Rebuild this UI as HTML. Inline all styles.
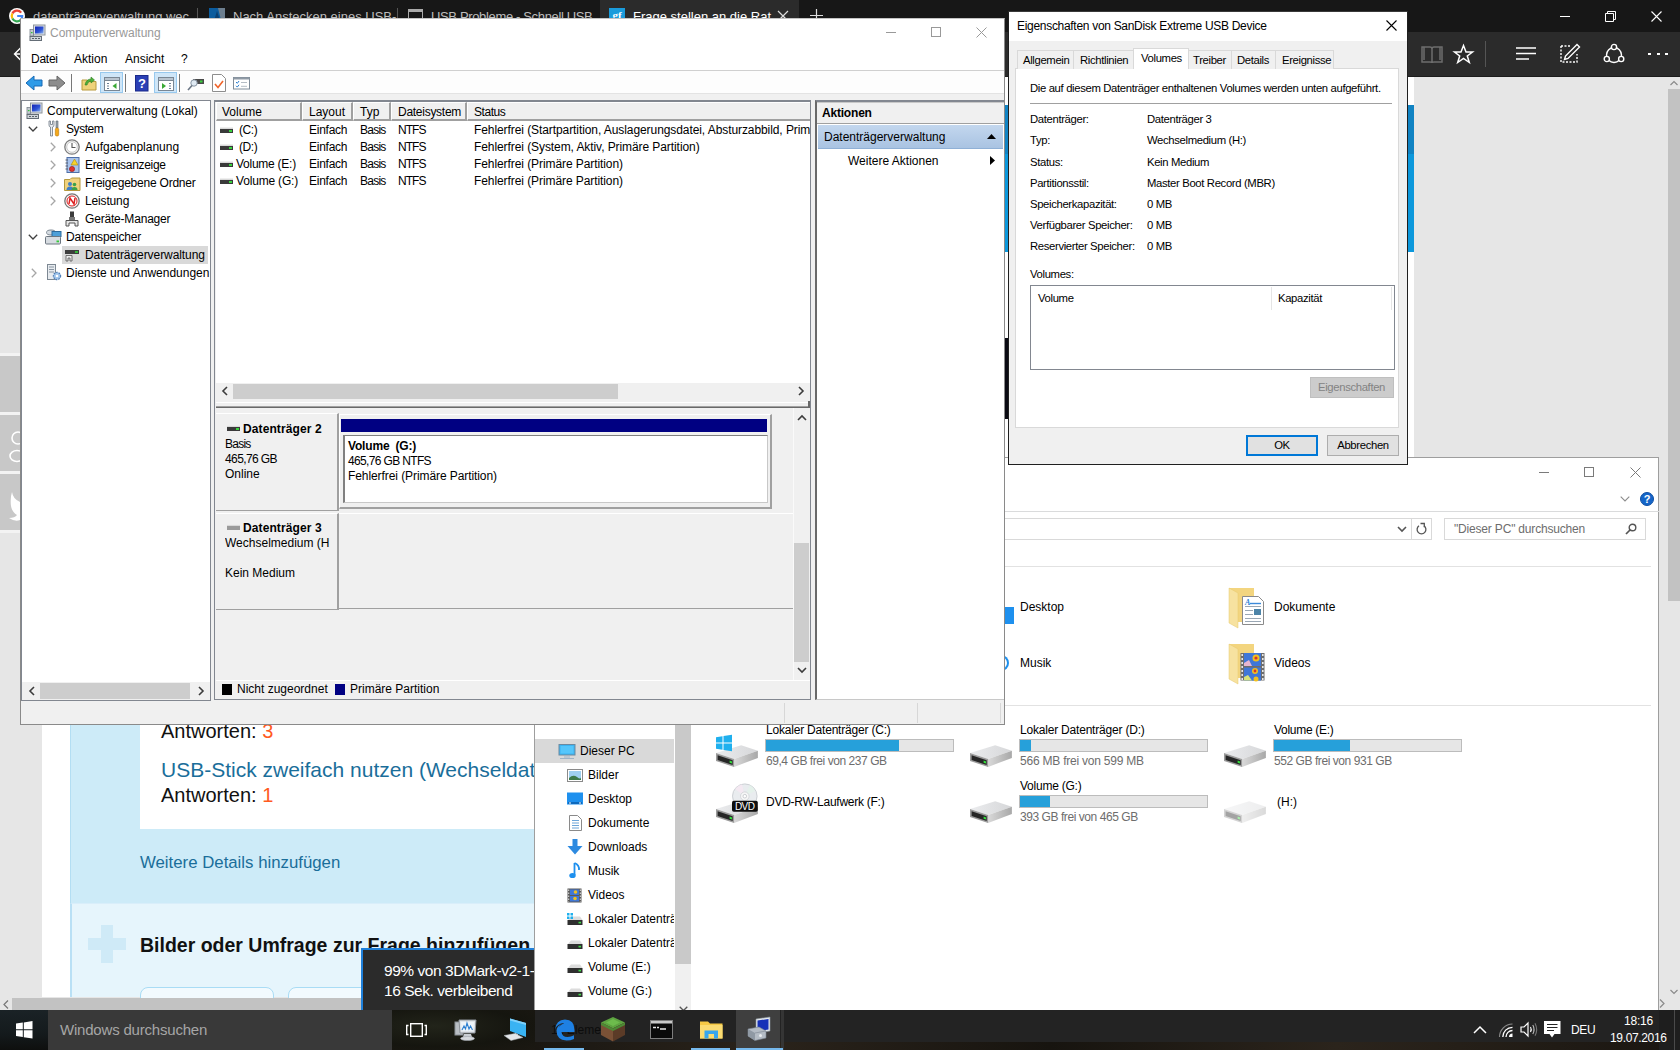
<!DOCTYPE html>
<html lang="de">
<head>
<meta charset="utf-8">
<title>Desktop</title>
<style>
*{box-sizing:border-box;margin:0;padding:0}
html,body{width:1680px;height:1050px;overflow:hidden;background:#1b1814}
body{position:relative;font-family:"Liberation Sans",sans-serif;font-size:12px;color:#000}
.a{position:absolute;white-space:nowrap}
.t{position:absolute;white-space:nowrap;line-height:16px;height:16px}
svg{position:absolute;overflow:visible}
/* ---------- EDGE ---------- */
#edge{left:0;top:0;width:1680px;height:1010px;background:#e6e6e6;overflow:hidden}
#tabbar{left:0;top:0;width:1680px;height:32px;background:#171717}
#etool{left:0;top:32px;width:1680px;height:45px;background:#2b2b2b;border-bottom:1px solid #1c1c1c}
.tabt{color:#bdbdbd;font-size:13px;top:8px;line-height:18px}
/* ---------- CV ---------- */
.win{position:absolute;left:0;top:0;width:1680px;height:1050px}
.hd{top:102px;height:19px;background:#f0f0f0;border-left:1px solid #fff;border-top:1px solid #fff;border-right:2px solid #a0a0a0;border-bottom:2px solid #a0a0a0}
.dk{width:13px;height:6px;background:#d9d9d9;border-top:1px solid #eee}
.dk i{position:absolute;left:0;top:1px;width:13px;height:4px;background:#3a3a3a}
.dk i:after{content:"";position:absolute;right:1px;top:1px;width:3px;height:2px;background:#39d43c}
.dk.g i{background:#9a9a9a}
.dk.g i:after{display:none}
#cv{left:20px;top:18px;width:985px;height:705px;background:#fff;border:1px solid #9b9b9b;overflow:hidden}
/* ---------- DLG ---------- */
#dlg{left:1008px;top:11px;width:400px;height:454px;background:#f0f0f0;border:1px solid #1c1c1c;overflow:hidden}
.d{font-size:11.3px;letter-spacing:-0.35px}
.tb{top:50px;height:19px;background:#f0f0f0;border:1px solid #d9d9d9;border-bottom:none}
/* ---------- EXPLORER ---------- */
#ex{left:535px;top:440px;width:1119px;height:602px;background:#fff;border:1px solid #8e8e8e;overflow:hidden}
.bar{width:189px;height:13px;background:#e6e6e6;border:1px solid #bcbcbc}
.bar i{position:absolute;left:0;top:0;height:11px;background:#26a0da}
.fr{color:#6d6d6d;letter-spacing:-.44px}
/* ---------- TASKBAR ---------- */
#tb{left:0;top:1010px;width:1680px;height:40px;background:#1d1b18;overflow:hidden}
</style>
</head>
<body>
<svg width="0" height="0" style="left:-10px;top:-10px"><defs>
<linearGradient id="dg" x1="0" y1="0" x2="1" y2="0"><stop offset="0" stop-color="#ebecee"/><stop offset="1" stop-color="#d6d7d9"/></linearGradient><linearGradient id="dg2" x1="0" y1="0" x2="1" y2="0"><stop offset="0" stop-color="#d9d9d9"/><stop offset="1" stop-color="#a8a8a8"/></linearGradient>
<linearGradient id="scr" x1="0" y1="0" x2="1" y2="1"><stop offset="0" stop-color="#1423b4"/><stop offset=".6" stop-color="#2f56d6"/><stop offset="1" stop-color="#8fb6ee"/></linearGradient>
<g id="drv"><path d="M1 19.100 L26.200 11.200 L42.900 16.700 L19.100 25 Z" fill="url(#dg)"/><path d="M19.100 25 L42.900 16.700 V23.900 L19.100 32.900 Z" fill="url(#dg2)"/><path d="M1 19.100 L19.100 25 V32.900 L1 27 Z" fill="#9b9b9b"/><path d="M2.600 21.300 L17.700 26.300 V31 L2.600 26.100 Z" fill="#262626"/><path d="M14.600 26.600 L17 27.400 V29.600 L14.600 28.800 Z" fill="#35e03c"/></g>
<g id="sdrv"><path d="M1 7 L4 3.500 H13 L15.500 7 Z" fill="#dcdcdc"/><rect x=".5" y="7" width="15" height="5" fill="#2f2f2f"/><rect x="11.500" y="8.800" width="2.500" height="1.600" fill="#3fdc45"/></g>
</defs></svg>
<div id="edge" class="a">
  <!-- page content -->
  <div class="a" style="left:0;top:353px;width:20px;height:180px;background:#f3f3f3"></div>
  <div class="a" style="left:0;top:356px;width:20px;height:56px;background:#c8c8c8"></div>
  <div class="a" style="left:0;top:415px;width:20px;height:56px;background:#c8c8c8"></div>
  <div class="a" style="left:0;top:474px;width:20px;height:56px;background:#c8c8c8"></div>
  <svg style="left:9px;top:431px" width="12" height="32"><circle cx="9" cy="7" r="6" fill="none" stroke="#fff" stroke-width="1.6"/><ellipse cx="8" cy="25" rx="7" ry="5.500" fill="none" stroke="#fff" stroke-width="1.600"/></svg>
  <svg style="left:9px;top:492px" width="12" height="30"><path d="M3 0 Q4 7 11 10 V28 Q6 30 0 26 Q6 26 8 23 Q3 20 2 14 Q1 6 3 0 Z" fill="#fff"/></svg>
  <!-- white page column -->
  <div class="a" style="left:42px;top:77px;width:1372px;height:920px;background:#fff"></div>
  <div class="a" style="left:900px;top:105px;width:514px;height:147px;background:#0c98dc"></div>
  <div class="a" style="left:900px;top:105px;width:514px;height:49px;background:#1183c3"></div>
  <div class="a" style="left:900px;top:338px;width:108px;height:81px;background:#0a0a12"></div>
  <div class="a" style="left:70px;top:600px;width:1534px;height:304px;background:#cdebf8;border-left:1px solid #b3def3"></div>
  <div class="a" style="left:140px;top:600px;width:1464px;height:229px;background:#fff"></div>
  <div class="a" style="left:70px;top:903px;width:1534px;height:94px;background:#e6f5fc;border-left:2px solid #b9e0f5;border-top:1px solid #d9eefa"></div>
  <div class="a" style="left:161px;top:719px;font-size:20px;line-height:24px;color:#111">Antworten: <span style="color:#ff5a1f">3</span></div>
  <div class="a" style="left:161px;top:757px;font-size:21px;line-height:26px;color:#1a6e9a">USB-Stick zweifach nutzen (Wechseldatenträger und Festplatte)</div>
  <div class="a" style="left:161px;top:783px;font-size:20px;line-height:24px;color:#111">Antworten: <span style="color:#ff5a1f">1</span></div>
  <div class="a" style="left:140px;top:852px;font-size:16.8px;line-height:22px;color:#1a6e9a">Weitere Details hinzufügen</div>
  <!-- plus icon -->
  <div class="a" style="left:101px;top:925px;width:12px;height:38px;background:#cfeaf7"></div>
  <div class="a" style="left:88px;top:938px;width:38px;height:12px;background:#cfeaf7"></div>
  <div class="a" style="left:140px;top:932px;font-size:19.5px;font-weight:bold;line-height:26px;color:#111">Bilder oder Umfrage zur Frage hinzufügen</div>
  <div class="a" style="left:140px;top:987px;width:134px;height:30px;border:1px solid #a9dcf5;border-radius:8px;background:#f2fafe"></div>
  <div class="a" style="left:288px;top:987px;width:134px;height:30px;border:1px solid #a9dcf5;border-radius:8px;background:#f2fafe"></div>
  <!-- horizontal scrollbar -->
  <div class="a" style="left:0;top:998px;width:1667px;height:12px;background:#e6e6e6"></div>
  <div class="a" style="left:12px;top:998px;width:1500px;height:12px;background:#c2c2c2"></div>
  <svg style="left:2px;top:1000px" width="8" height="9"><path d="M6 0.5 L2 4.5 L6 8.5" fill="none" stroke="#777" stroke-width="1.2"/></svg>
  <svg style="left:1659px;top:999px" width="6" height="9"><path d="M1 0.5 L5 4.5 L1 8.5" fill="none" stroke="#8a8a8a" stroke-width="1.2"/></svg>
  <!-- vertical scrollbar -->
  <div class="a" style="left:1667px;top:77px;width:13px;height:920px;background:#e6e6e6"></div>
  <div class="a" style="left:1668px;top:89px;width:12px;height:512px;background:#c2c2c2"></div>
  <svg style="left:1670px;top:80px" width="8" height="6"><path d="M0.5 5 L4 1.5 L7.500 5" fill="none" stroke="#8a8a8a" stroke-width="1.2"/></svg>
  <svg style="left:1670px;top:989px" width="8" height="6"><path d="M0.5 1 L4 4.500 L7.500 1" fill="none" stroke="#8a8a8a" stroke-width="1.2"/></svg>
  <!-- download notification -->
  <div class="a" style="left:361px;top:948px;width:180px;height:62px;background:#2b2b2b;border-left:2px solid #1e7fd9;border-top:2px solid #1e7fd9"></div>
  <div class="a" style="left:384px;top:961px;font-size:15.5px;letter-spacing:-.45px;line-height:20px;color:#fff">99% von 3DMark-v2-1-2852.zip</div>
  <div class="a" style="left:384px;top:981px;font-size:15.5px;letter-spacing:-.45px;line-height:20px;color:#fff">16 Sek. verbleibend</div>

  <!-- tab bar -->
  <div id="tabbar" class="a"></div>
  <div class="a" style="left:600px;top:0;width:199px;height:31px;background:#2b2b2b"></div>
  <svg style="left:9px;top:8px" width="16" height="16"><circle cx="8" cy="8" r="8" fill="#fff"/><path d="M12.200 4.600 A5.200 5.200 0 0 0 3.400 5.500" fill="none" stroke="#ea4335" stroke-width="2.200"/><path d="M3.400 5.500 A5.200 5.200 0 0 0 3.400 10.500" fill="none" stroke="#fbbc05" stroke-width="2.200"/><path d="M3.400 10.500 A5.200 5.200 0 0 0 11.800 11.800" fill="none" stroke="#34a853" stroke-width="2.200"/><path d="M11.800 11.800 A5.200 5.200 0 0 0 13.200 8 H8.200" fill="none" stroke="#4285f4" stroke-width="2.200"/></svg>
  <div class="a tabt" style="left:33px">datenträgerverwaltung wec</div>
  <div class="a" style="left:197px;top:8px;width:1px;height:16px;background:#555"></div>
  <svg style="left:209px;top:8px" width="16" height="16"><rect width="16" height="16" fill="#0b5c9e"/><path d="M9 0 H16 V16 H13 Z" fill="#6d7f8f"/><path d="M8 3 L4 16 H6.500 L8 10 L9.500 16 H12 Z" fill="#0a3f70"/></svg>
  <div class="a tabt" style="left:233px">Nach Anstecken eines USB-</div>
  <div class="a" style="left:397px;top:8px;width:1px;height:16px;background:#555"></div>
  <div class="a" style="left:408px;top:9px;width:15px;height:13px;border:1px solid #aaa;border-top:3px solid #aaa"></div>
  <div class="a tabt" style="left:431px;letter-spacing:-.35px">USB Probleme - Schnell USB</div>
  <div class="a" style="left:609px;top:8px;width:16px;height:16px;background:#1a9bdb;color:#fff;font:bold 11px/14px 'Liberation Serif',serif;text-align:center">gf</div>
  <div class="a tabt" style="left:633px;color:#fff">Frage stellen an die Rat</div>
  <svg style="left:777px;top:10px" width="12" height="12"><path d="M1 1 L11 11 M11 1 L1 11" stroke="#ddd" stroke-width="1.2"/></svg>
  <svg style="left:810px;top:9px" width="13" height="13"><path d="M6.5 0 V13 M0 6.5 H13" stroke="#ddd" stroke-width="1.2"/></svg>
  <!-- window controls -->
  <div class="a" style="left:1560px;top:16px;width:10px;height:1px;background:#fff"></div>
  <svg style="left:1605px;top:11px" width="11" height="11"><path d="M0.5 2.5 H8.5 V10.5 H0.5 Z M2.5 2.5 V0.5 H10.5 V8.5 H8.5" fill="none" stroke="#fff" stroke-width="1"/></svg>
  <svg style="left:1651px;top:11px" width="11" height="11"><path d="M0.5 0.5 L10.5 10.5 M10.5 0.5 L0.5 10.5" stroke="#fff" stroke-width="1.1"/></svg>
  <!-- toolbar -->
  <div id="etool" class="a"></div>
  <svg style="left:13px;top:47px" width="16" height="14"><path d="M8 0.5 L1.5 7 L8 13.5 M1.5 7 H16" fill="none" stroke="#fff" stroke-width="1.4"/></svg>
  <!-- reading view (disabled) -->
  <svg style="left:1421px;top:45px" width="22" height="20"><path d="M1 2 H9 Q11 2 11 4 V18 Q11 17 9 17 H1 Z M21 2 H13 Q11 2 11 4 V18 Q11 17 13 17 H21 Z M3 2 V15 M19 2 V15" fill="none" stroke="#6d6d6d" stroke-width="1.5"/></svg>
  <svg style="left:1453px;top:44px" width="21" height="20"><path d="M10.5 1.5 L13 8 H19.5 L14.3 12 L16.3 18.5 L10.5 14.5 L4.7 18.5 L6.7 12 L1.5 8 H8 Z" fill="none" stroke="#fff" stroke-width="1.5" stroke-linejoin="miter"/></svg>
  <div class="a" style="left:1485px;top:41px;width:1px;height:26px;background:#555"></div>
  <svg style="left:1516px;top:47px" width="20" height="14"><path d="M0 1 H20 M0 6.5 H20 M0 12 H13" stroke="#fff" stroke-width="1.5"/></svg>
  <svg style="left:1559px;top:43px" width="22" height="22"><path d="M2 3 H12 M2 3 V19 H18 V11" fill="none" stroke="#fff" stroke-width="1.4" stroke-dasharray="2 1.5"/><path d="M18 1.5 L20.5 4 L9 15.5 L5.5 16.5 L6.5 13 Z" fill="none" stroke="#fff" stroke-width="1.4"/></svg>
  <svg style="left:1603px;top:43px" width="22" height="22"><circle cx="11" cy="12" r="7.5" fill="none" stroke="#fff" stroke-width="1.4"/><circle cx="11" cy="4" r="2.6" fill="#2b2b2b" stroke="#fff" stroke-width="1.4"/><circle cx="3.8" cy="16" r="2.6" fill="#2b2b2b" stroke="#fff" stroke-width="1.4"/><circle cx="18.2" cy="16" r="2.6" fill="#2b2b2b" stroke="#fff" stroke-width="1.4"/></svg>
  <div class="a" style="left:1648px;top:53px;width:3px;height:2px;background:#fff"></div>
  <div class="a" style="left:1657px;top:53px;width:3px;height:2px;background:#fff"></div>
  <div class="a" style="left:1665px;top:53px;width:3px;height:2px;background:#fff"></div>
</div>

<div class="win" style="clip-path:inset(457px 21px 9px 534px)">
  <div class="a" style="left:534px;top:457px;width:1125px;height:585px;background:#fff;border:1px solid #9e9e9e"></div>
  <!-- caption buttons -->
  <div class="a" style="left:1539px;top:472px;width:10px;height:1px;background:#7a7a7a"></div>
  <div class="a" style="left:1584px;top:467px;width:10px;height:10px;border:1px solid #7a7a7a"></div>
  <svg style="left:1630px;top:467px" width="11" height="11"><path d="M0.5 0.5 L10.5 10.5 M10.5 0.5 L0.5 10.5" stroke="#7a7a7a" stroke-width="1"/></svg>
  <svg style="left:1620px;top:496px" width="10" height="6"><path d="M.7 .7 L5 5 L9.3 .7" fill="none" stroke="#8c8c8c" stroke-width="1.1"/></svg>
  <div class="a" style="left:1640px;top:492px;width:14px;height:14px;border-radius:7px;background:#1565c8;border:1px solid #0f4fa3;color:#fff;font-weight:bold;font-size:11px;line-height:12px;text-align:center">?</div>
  <div class="a" style="left:535px;top:511px;width:1124px;height:1px;background:#dadbdc"></div>
  <!-- address -->
  <div class="a" style="left:700px;top:518px;width:732px;height:22px;border:1px solid #d9d9d9"></div>
  <div class="a" style="left:1411px;top:519px;width:1px;height:20px;background:#d9d9d9"></div>
  <svg style="left:1397px;top:526px" width="10" height="7"><path d="M1 1 L5 5 L9 1" fill="none" stroke="#555" stroke-width="1.6"/></svg>
  <svg style="left:1416px;top:523px" width="11" height="12"><path d="M3 2.8 A4.4 4.4 0 1 0 8 2.8" fill="none" stroke="#555" stroke-width="1.3"/><path d="M4.5 .5 H8.3 V4.3" fill="none" stroke="#555" stroke-width="1.3"/></svg>
  <div class="a" style="left:1444px;top:518px;width:202px;height:22px;border:1px solid #d9d9d9"></div>
  <div class="t" style="left:1454px;top:521px;color:#6d6d6d;letter-spacing:-.18px">"Dieser PC" durchsuchen</div>
  <svg style="left:1625px;top:523px" width="12" height="12"><circle cx="7.5" cy="4.5" r="3.3" fill="none" stroke="#555" stroke-width="1.4"/><path d="M5 7 L1 11" stroke="#555" stroke-width="1.7"/></svg>
  <!-- section lines -->
  <div class="a" style="left:1000px;top:566px;width:651px;height:1px;background:#e2e2e2"></div>
  <div class="a" style="left:1000px;top:705px;width:651px;height:1px;background:#e2e2e2"></div>
  <!-- folders -->
  <div class="a" style="left:1004px;top:607px;width:10px;height:17px;background:#1e90ee"></div>
  <div class="a" style="left:1000px;top:655px;width:9px;height:16px;border:2px solid #1e90ee;border-radius:0 8px 8px 0;border-left:none"></div>
  <div class="t" style="left:1020px;top:599px">Desktop</div>
  <div class="t" style="left:1020px;top:655px">Musik</div>
  <svg style="left:1228px;top:587px" width="38" height="42"><path d="M1 1 H26 V35 H10 Z" fill="#f3d57f"/><path d="M1 1 L10 6 V41 L1 36 Z" fill="#f7e2a0" stroke="#e6c96e" stroke-width=".5"/><path d="M14.500 9.500 H30.500 L35.500 14.500 V37.500 H14.500 Z" fill="#fff" stroke="#8a8a8a"/><path d="M17 19.500 H33 M17 23.500 H25 M17 27.500 H25 M17 31.500 H33 M17 34.500 H33" stroke="#9aa7b4"/><path d="M22 16.500 H33" stroke="#3b8ad9" stroke-width="1.4"/><rect x="26" y="22" width="7" height="6" fill="#4c84a8"/><text x="17" y="18" font-family="Liberation Serif,serif" font-style="italic" font-weight="bold" font-size="8" fill="#2f7fd6">A</text></svg>
  <div class="t" style="left:1274px;top:599px">Dokumente</div>
  <svg style="left:1228px;top:643px" width="38" height="42"><path d="M1 1 H26 V35 H10 Z" fill="#f3d57f"/><path d="M1 1 L10 6 V41 L1 36 Z" fill="#f7e2a0" stroke="#e6c96e" stroke-width=".5"/><rect x="12.500" y="10" width="24" height="27.500" fill="#6d6d6d"/><rect x="16" y="10" width="17" height="13" fill="#3f77d8"/><rect x="16" y="24.500" width="17" height="13" fill="#3f77d8"/><path d="M14.2 11 V37 M34.800 11 V37" stroke="#e8e8e8" stroke-width="1.6" stroke-dasharray="2 2"/><circle cx="28" cy="15" r="3.500" fill="#f0c020"/><circle cx="28" cy="15" r="1.6" fill="#d9342b"/><circle cx="27" cy="28" r="3" fill="#f0c020"/><circle cx="27" cy="28" r="1.400" fill="#d9342b"/><path d="M16 20 L21 17 L24 23 H16 Z" fill="#e7b6d0"/><circle cx="28" cy="36" r="2.500" fill="#f0c020"/><path d="M16 34 L20 32 L24 37.500 H16 Z" fill="#d8e27a"/></svg>
  <div class="t" style="left:1274px;top:655px">Videos</div>
  <!-- drives row 1 -->
  <div class="t" style="left:766px;top:722px;letter-spacing:-.2px">Lokaler Datenträger (C:)</div>
  <div class="a bar" style="left:765px;top:739px"><i style="width:133px"></i></div>
  <div class="t fr" style="left:766px;top:753px">69,4 GB frei von 237 GB</div>
  <div class="t" style="left:1020px;top:722px;letter-spacing:-.2px">Lokaler Datenträger (D:)</div>
  <div class="a bar" style="left:1019px;top:739px"><i style="width:11px"></i></div>
  <div class="t fr" style="left:1020px;top:753px;letter-spacing:-.22px">566 MB frei von 599 MB</div>
  <div class="t" style="left:1274px;top:722px;letter-spacing:-.29px">Volume (E:)</div>
  <div class="a bar" style="left:1273px;top:739px"><i style="width:76px"></i></div>
  <div class="t fr" style="left:1274px;top:753px">552 GB frei von 931 GB</div>
  <!-- drives row 2 -->
  <div class="t" style="left:766px;top:794px;letter-spacing:-.26px">DVD-RW-Laufwerk (F:)</div>
  <div class="t" style="left:1020px;top:778px;letter-spacing:-.23px">Volume (G:)</div>
  <div class="a bar" style="left:1019px;top:795px"><i style="width:30px"></i></div>
  <div class="t fr" style="left:1020px;top:809px">393 GB frei von 465 GB</div>
  <div class="t" style="left:1277px;top:794px">(H:)</div>
  <!-- drive icons -->
  <svg style="left:715px;top:734px" width="46" height="34"><use href="#drv"/><path d="M1 3.200 L7.500 2.200 V8.500 H1 Z M8.500 2 L17 .8 V8.500 H8.500 Z M1 9.500 H7.500 V15.800 L1 14.800 Z M8.500 9.500 H17 V17.200 L8.500 16 Z" fill="#1fb0ee"/></svg>
  <svg style="left:969px;top:734px" width="46" height="34"><use href="#drv"/></svg>
  <svg style="left:1223px;top:734px" width="46" height="34"><use href="#drv"/></svg>
  <svg style="left:715px;top:790px" width="46" height="34"><use href="#drv"/><circle cx="29.800" cy="6.200" r="12.300" fill="#e9ecef" stroke="#c3c7cc" stroke-width=".8"/><path d="M29.800 6.200 L20 -1 A12.300 12.300 0 0 1 27 -5.800 Z" fill="#f6e9f3" opacity=".8"/><path d="M29.800 6.200 L40 1 A12.300 12.300 0 0 0 35 -5 Z" fill="#e3f3ea" opacity=".8"/><circle cx="29.800" cy="6.200" r="4.300" fill="#f7f7f7" stroke="#cfd2d6" stroke-width=".8"/><circle cx="29.800" cy="6.200" r="1.800" fill="#fff" stroke="#b9bcc1" stroke-width=".7"/><rect x="17" y="10.700" width="25.800" height="11" rx="1.800" fill="#0e0e0e"/><text x="29.900" y="19.800" font-family="Liberation Sans,sans-serif" font-size="10" fill="#fff" text-anchor="middle" textLength="20">DVD</text></svg>
  <svg style="left:969px;top:790px" width="46" height="34"><use href="#drv"/></svg>
  <svg style="left:1223px;top:790px" width="46" height="34" opacity=".42"><use href="#drv"/></svg>
  <!-- nav pane -->
  <div class="a" style="left:535px;top:739px;width:139px;height:24px;background:#d9d9d9"></div>
  <div class="a" style="left:675px;top:700px;width:16px;height:342px;background:#f0f0f0"></div>
  <div class="a" style="left:675px;top:700px;width:16px;height:264px;background:#c9c9c9"></div>
  <svg style="left:679px;top:1006px" width="9" height="6"><path d="M.7 .7 L4.500 4.500 L8.300 .7" fill="none" stroke="#555" stroke-width="1.300"/></svg>
  <div class="t" style="left:580px;top:743px">Dieser PC</div>
  <div class="t" style="left:588px;top:767px">Bilder</div>
  <div class="t" style="left:588px;top:791px">Desktop</div>
  <div class="t" style="left:588px;top:815px">Dokumente</div>
  <div class="t" style="left:588px;top:839px">Downloads</div>
  <div class="t" style="left:588px;top:863px">Musik</div>
  <div class="t" style="left:588px;top:887px">Videos</div>
  <div class="a" style="left:588px;top:911px;width:86px;height:16px;overflow:hidden"><div class="t" style="left:0;top:0">Lokaler Datenträger (C:)</div></div>
  <div class="a" style="left:588px;top:935px;width:86px;height:16px;overflow:hidden"><div class="t" style="left:0;top:0">Lokaler Datenträger (D:)</div></div>
  <div class="t" style="left:588px;top:959px">Volume (E:)</div>
  <div class="t" style="left:588px;top:983px">Volume (G:)</div>
  <div class="t" style="left:551px;top:1022px;color:#333">11 Elemente</div>
  <!-- nav icons -->
  <svg style="left:558px;top:744px" width="18" height="15"><rect x="1" y=".5" width="16" height="10.500" fill="#3bb4f2" stroke="#6c8aa0"/><rect x="2.500" y="2" width="13" height="7.500" fill="#55c6fb"/><path d="M6 13 H12 M2 14.500 H16" stroke="#9fb3c6" stroke-width="1"/></svg>
  <svg style="left:567px;top:769px" width="16" height="13"><rect x=".5" y=".5" width="15" height="12" fill="#fff" stroke="#8a8a8a"/><rect x="2" y="2" width="12" height="9" fill="#9fd0f0"/><path d="M2 9 Q6 5 10 8 T14 8 V11 H2 Z" fill="#3d7a4a"/></svg>
  <svg style="left:567px;top:792px" width="16" height="13"><rect x="0" y=".5" width="16" height="12" fill="#1e90ee"/><path d="M1 11 H15" stroke="#0a5cab" stroke-width="1.500"/><path d="M2 11 H4 M12 11 H14" stroke="#fff" stroke-width="1"/></svg>
  <svg style="left:569px;top:815px" width="13" height="16"><path d="M.5 .5 H8.500 L12.500 4.500 V15.500 H.5 Z" fill="#fff" stroke="#8a8a8a"/><path d="M3 5.500 H10 M3 8 H10 M3 10.500 H10 M3 13 H10" stroke="#5b9bd5" stroke-width=".9"/></svg>
  <svg style="left:567px;top:839px" width="16" height="16"><path d="M5.500 0 H10.500 V7 H15.500 L8 15.500 L.5 7 H5.500 Z" fill="#2d8ae0"/></svg>
  <svg style="left:569px;top:862px" width="12" height="17"><path d="M5.500 1 V13" stroke="#1e90ee" stroke-width="1.800"/><path d="M5.500 1 Q10.500 3 10 8" fill="none" stroke="#1e90ee" stroke-width="1.800"/><ellipse cx="3.500" cy="13.500" rx="3.200" ry="2.600" fill="#1e90ee"/></svg>
  <svg style="left:567px;top:888px" width="15" height="15"><rect x=".5" y=".5" width="14" height="14" fill="#5a5a5a"/><rect x="3" y="1.500" width="9" height="5.500" fill="#3f77d8"/><rect x="3" y="8" width="9" height="5.500" fill="#3f77d8"/><circle cx="8.500" cy="4" r="1.800" fill="#f0c020"/><circle cx="8" cy="10.500" r="1.800" fill="#f0c020"/><path d="M1.700 1.500 V14 M13.300 1.500 V14" stroke="#e0e0e0" stroke-width="1" stroke-dasharray="1.500 1.500"/></svg>
  <svg style="left:567px;top:913px" width="16" height="13"><use href="#sdrv"/><path d="M0 0 H2.500 V2.500 H0 Z M3.500 0 H6 V2.500 H3.500 Z M0 3.500 H2.500 V6 H0 Z M3.500 3.500 H6 V6 H3.500 Z" fill="#1fb0ee"/></svg>
  <svg style="left:567px;top:937px" width="16" height="13"><use href="#sdrv"/></svg>
  <svg style="left:567px;top:961px" width="16" height="13"><use href="#sdrv"/></svg>
  <svg style="left:567px;top:985px" width="16" height="13"><use href="#sdrv"/></svg>
</div>

<div class="win" style="clip-path:inset(18px 675px 325px 20px)">
  <div class="a" style="left:20px;top:18px;width:985px;height:707px;background:#fff;border:1px solid #8a8a8a;border-top-color:#c4c4c4"></div>
  <!-- title -->
  <svg style="left:29px;top:24px" width="17" height="17" viewBox="0 0 17 17"><rect x="4.500" y="1" width="11.500" height="10" fill="#dde1e5" stroke="#8d959d"/><rect x="6" y="2.500" width="8.500" height="7" fill="url(#scr)"/><rect x="1" y="5.500" width="3.500" height="6.500" fill="#c5cbd1" stroke="#7a838c" stroke-width=".8"/><rect x="2" y="8" width="1.500" height="1.200" fill="#2fc43a"/><rect x="1" y="12.500" width="11.500" height="4" fill="#cfd5da" stroke="#646d76"/><path d="M3 14.500 H5 M6 14.500 H8 M9 14.500 H11" stroke="#59626b"/></svg>
  <div class="t" style="left:50px;top:25px;color:#999">Computerverwaltung</div>
  <div class="a" style="left:886px;top:32px;width:10px;height:1px;background:#999"></div>
  <div class="a" style="left:931px;top:27px;width:10px;height:10px;border:1px solid #999"></div>
  <svg style="left:976px;top:27px" width="11" height="11"><path d="M0.5 0.5 L10.5 10.5 M10.5 0.5 L0.5 10.5" stroke="#999" stroke-width="1"/></svg>
  <!-- menu -->
  <div class="t" style="left:31px;top:51px;letter-spacing:-0.25px">Datei</div>
  <div class="t" style="left:74px;top:51px">Aktion</div>
  <div class="t" style="left:125px;top:51px">Ansicht</div>
  <div class="t" style="left:181px;top:51px">?</div>
  <div class="a" style="left:21px;top:70px;width:983px;height:1px;background:#d0d0d0"></div>
  <!-- toolbar -->
  <div class="a" style="left:21px;top:71px;width:983px;height:23px;background:#fdfdfd"></div>
  <div class="a" style="left:21px;top:94px;width:983px;height:630px;background:#f0f0f0"></div>
  <div class="a" style="left:21px;top:93px;width:983px;height:1px;background:#e3e3e3"></div>
  <svg style="left:25px;top:75px" width="18" height="16"><path d="M1 8 L9 1 V5 H17 V11 H9 V15 Z" fill="#2e9be8" stroke="#1769b5" stroke-width="1"/></svg>
  <svg style="left:48px;top:75px" width="18" height="16"><path d="M17 8 L9 1 V5 H1 V11 H9 V15 Z" fill="#8d8d8d" stroke="#666" stroke-width="1"/></svg>
  <div class="a" style="left:71px;top:74px;width:1px;height:18px;background:#777"></div>
  <svg style="left:81px;top:75px" width="16" height="16"><path d="M1 5 H6 L7.5 6.5 H15 V15 H1 Z" fill="#efd27a" stroke="#b99a3d"/><path d="M4 10 Q5 4 10 4 V2 L13.5 5 L10 8 V6 Q7 6 6 10 Z" fill="#4caf3a" stroke="#2f7d22" stroke-width=".6"/></svg>
  <div class="a" style="left:100px;top:72px;width:23px;height:21px;background:#cfe6f8;border:1px solid #98c9ee"></div>
  <svg style="left:104px;top:77px" width="16" height="14"><rect x=".5" y=".5" width="15" height="13" fill="#fff" stroke="#7a8794"/><rect x=".5" y=".5" width="15" height="3" fill="#b9c4cf" stroke="#7a8794"/><path d="M3 6.5 H5 M3 9 H5 M3 11.5 H5" stroke="#6b7f95"/><path d="M12.5 6 V12 L8.5 9 Z" fill="#3aa835"/></svg>
  <div class="a" style="left:125px;top:74px;width:1px;height:18px;background:#777"></div>
  <svg style="left:135px;top:75px" width="14" height="17"><rect x=".5" y=".5" width="12.5" height="15.5" fill="#2a3fb5" stroke="#1a2a8a"/><text x="7" y="13" font-family="Liberation Sans,sans-serif" font-size="13" font-weight="bold" fill="#fff" text-anchor="middle">?</text></svg>
  <div class="a" style="left:154px;top:72px;width:23px;height:21px;background:#cfe6f8;border:1px solid #98c9ee"></div>
  <svg style="left:158px;top:77px" width="16" height="14"><rect x=".5" y=".5" width="15" height="13" fill="#fff" stroke="#7a8794"/><rect x=".5" y=".5" width="15" height="3" fill="#b9c4cf" stroke="#7a8794"/><path d="M11 6.5 H13 M11 9 H13 M11 11.5 H13" stroke="#6b7f95"/><path d="M4 6 V12 L8 9 Z" fill="#3aa835"/></svg>
  <div class="a" style="left:179px;top:74px;width:1px;height:18px;background:#777"></div>
  <svg style="left:187px;top:77px" width="18" height="14"><rect x="6" y="2" width="11" height="5" fill="#4a4a4a"/><rect x="13" y="3.5" width="2.5" height="2" fill="#39d43c"/><circle cx="7" cy="6" r="3.2" fill="#dfe9f2" stroke="#8895a3"/><path d="M5 8.5 L1 13" stroke="#6a7685" stroke-width="1.6"/></svg>
  <svg style="left:212px;top:74px" width="14" height="18"><path d="M.5 .5 H9.5 L13.5 4.5 V17.5 H.5 Z" fill="#fff" stroke="#8d8d8d"/><path d="M3 10 L6 13.5 L11 7" fill="none" stroke="#f0642a" stroke-width="1.6"/></svg>
  <svg style="left:233px;top:77px" width="17" height="13"><rect x=".5" y=".5" width="16" height="11.500" fill="#fff" stroke="#7f8c99"/><rect x=".5" y=".5" width="16" height="2" fill="#8f9aa5"/><path d="M3 5 L4.300 6.300 L6 4 M3 8.800 L4.300 10.100 L6 7.800" fill="none" stroke="#2d7fd0"/><path d="M8 5.500 H14 M8 9.300 H14" stroke="#b5bdc5"/></svg>

  <!-- tree pane -->
  <div class="a" style="left:21px;top:100px;width:190px;height:601px;background:#fff;border:1px solid #828790"></div>
  <div class="a" style="left:62px;top:246px;width:146px;height:18px;background:#d9d9d9"></div>
  <div class="t" style="left:47px;top:103px">Computerverwaltung (Lokal)</div>
  <div class="t" style="left:66px;top:121px;letter-spacing:-0.43px">System</div>
  <div class="t" style="left:85px;top:139px">Aufgabenplanung</div>
  <div class="t" style="left:85px;top:157px;letter-spacing:-0.32px">Ereignisanzeige</div>
  <div class="t" style="left:85px;top:175px;letter-spacing:-0.22px">Freigegebene Ordner</div>
  <div class="t" style="left:85px;top:193px;letter-spacing:-0.15px">Leistung</div>
  <div class="t" style="left:85px;top:211px;letter-spacing:-0.19px">Geräte-Manager</div>
  <div class="t" style="left:66px;top:229px;letter-spacing:-0.18px">Datenspeicher</div>
  <div class="t" style="left:85px;top:247px;letter-spacing:-0.07px">Datenträgerverwaltung</div>
  <div class="t" style="left:66px;top:265px">Dienste und Anwendungen</div>
  <!-- tree chevrons -->
  <svg style="left:28px;top:126px" width="10" height="6"><path d="M.8 .8 L5 5 L9.2 .8" fill="none" stroke="#404040" stroke-width="1.3"/></svg>
  <svg style="left:28px;top:234px" width="10" height="6"><path d="M.8 .8 L5 5 L9.2 .8" fill="none" stroke="#404040" stroke-width="1.3"/></svg>
  <svg style="left:50px;top:142px" width="6" height="10"><path d="M.8 .8 L5 5 L.8 9.2" fill="none" stroke="#a6a6a6" stroke-width="1.3"/></svg>
  <svg style="left:50px;top:160px" width="6" height="10"><path d="M.8 .8 L5 5 L.8 9.2" fill="none" stroke="#a6a6a6" stroke-width="1.3"/></svg>
  <svg style="left:50px;top:178px" width="6" height="10"><path d="M.8 .8 L5 5 L.8 9.2" fill="none" stroke="#a6a6a6" stroke-width="1.3"/></svg>
  <svg style="left:50px;top:196px" width="6" height="10"><path d="M.8 .8 L5 5 L.8 9.2" fill="none" stroke="#a6a6a6" stroke-width="1.3"/></svg>
  <svg style="left:31px;top:268px" width="6" height="10"><path d="M.8 .8 L5 5 L.8 9.2" fill="none" stroke="#a6a6a6" stroke-width="1.3"/></svg>
  <!-- tree icons -->
  <svg style="left:26px;top:102px" width="17" height="17" viewBox="0 0 17 17"><rect x="4.500" y="1" width="11.500" height="10" fill="#dde1e5" stroke="#8d959d"/><rect x="6" y="2.500" width="8.500" height="7" fill="url(#scr)"/><rect x="1" y="5.500" width="3.500" height="6.500" fill="#c5cbd1" stroke="#7a838c" stroke-width=".8"/><rect x="2" y="8" width="1.500" height="1.200" fill="#2fc43a"/><rect x="1" y="12.500" width="11.500" height="4" fill="#cfd5da" stroke="#646d76"/><path d="M3 14.500 H5 M6 14.500 H8 M9 14.500 H11" stroke="#59626b"/></svg>
  <svg style="left:46px;top:120px" width="14" height="17"><path d="M3 1 V5 Q3 7 4.5 7 V16 H6.5 V7 Q8 7 8 5 V1 H6.5 V4.5 H4.5 V1 Z" fill="#e8ebee" stroke="#6f7a85" stroke-width=".8"/><path d="M10 1 H12 V8 H10 Z" fill="#9aa4ad" stroke="#5b6670" stroke-width=".6"/><rect x="9.3" y="8" width="3.4" height="8" rx="1.5" fill="#f3a81b" stroke="#b87508" stroke-width=".6"/></svg>
  <svg style="left:64px;top:139px" width="16" height="16"><circle cx="8" cy="8" r="7.2" fill="#f4f4f4" stroke="#7d7d7d" stroke-width="1.3"/><circle cx="8" cy="8" r="5.3" fill="#fff" stroke="#c9c9c9"/><path d="M8 4 V8.5 H11.5" fill="none" stroke="#555" stroke-width="1.1"/></svg>
  <svg style="left:65px;top:157px" width="15" height="16"><rect x="2" y=".5" width="12" height="15" fill="#a8c3ec" stroke="#4e6fa8"/><path d="M.5 3 H3 M.5 6 H3 M.5 9 H3 M.5 12 H3" stroke="#59606a"/><path d="M9.5 2 L13 8 H6 Z" fill="#f6d22c" stroke="#a98a10" stroke-width=".6"/><circle cx="7" cy="12" r="2.6" fill="#e0342f" stroke="#8e1a17" stroke-width=".6"/></svg>
  <svg style="left:64px;top:176px" width="17" height="15"><path d="M.5 3.5 H6 L7.5 2 H16 V14.5 H.5 Z" fill="#f0d27d" stroke="#b5983d"/><circle cx="6" cy="8" r="2" fill="#3f7fc8"/><path d="M2.5 14 Q2.5 10.5 6 10.5 Q9.5 10.5 9.5 14 Z" fill="#3f7fc8"/><circle cx="10.5" cy="8.5" r="1.8" fill="#3da04a"/><path d="M7.5 14 Q7.5 11 10.5 11 Q13.5 11 13.5 14 Z" fill="#3da04a"/></svg>
  <svg style="left:64px;top:193px" width="16" height="16"><circle cx="8" cy="8" r="7.2" fill="#f2f2f2" stroke="#777" stroke-width="1.3"/><circle cx="8" cy="8" r="5" fill="#fff" stroke="#d22" stroke-width="1"/><path d="M5 11 L6 5 L10 11 L11 5" fill="none" stroke="#d22" stroke-width="1.5"/></svg>
  <svg style="left:65px;top:211px" width="14" height="16"><rect x="5" y=".5" width="4" height="6" fill="#3b3b3b"/><rect x="4" y="6" width="6" height="3" fill="#777"/><path d="M1 9.5 H13 V15 H10 V12 H4 V15 H1 Z" fill="#e6e6e6" stroke="#555"/></svg>
  <svg style="left:45px;top:229px" width="17" height="16"><ellipse cx="6" cy="3.5" rx="4.5" ry="2.5" fill="#d5dbe1" stroke="#7d8893"/><rect x="7" y="2.5" width="9" height="5" fill="#4d9fd8" stroke="#2c6b9d"/><rect x=".5" y="7.5" width="15" height="7.5" rx="1" fill="#d7dce1" stroke="#6c7680"/><rect x="11.5" y="11.5" width="2.5" height="1.8" fill="#36c93a"/></svg>
  <svg style="left:64px;top:248px" width="16" height="14"><path d="M1 2 H15 V6 H1 Z" fill="#3d3d3d"/><rect x="11" y="3.2" width="3" height="1.6" fill="#33d43a"/><path d="M2 7.5 H8 V13 H6 V10 H4 V13 H2 Z" fill="#ececec" stroke="#555" stroke-width=".8"/></svg>
  <svg style="left:46px;top:264px" width="16" height="17"><rect x="1.5" y=".5" width="8" height="15" fill="#e7ebef" stroke="#7d8893"/><path d="M3 3 H8 M3 5.5 H8 M3 8 H8" stroke="#8a96a3"/><circle cx="11" cy="12" r="3.6" fill="#9ec3ea" stroke="#4f7fb7" stroke-width="1.2" stroke-dasharray="1.6 1"/><circle cx="11" cy="12" r="1.3" fill="#fff"/></svg>
  <!-- tree hscroll -->
  <div class="a" style="left:22px;top:682px;width:188px;height:18px;background:#f0f0f0"></div>
  <div class="a" style="left:40px;top:683px;width:150px;height:16px;background:#cdcdcd"></div>
  <svg style="left:28px;top:686px" width="7" height="10"><path d="M6 1 L2 5 L6 9" fill="none" stroke="#3c3c3c" stroke-width="1.6"/></svg>
  <svg style="left:198px;top:686px" width="7" height="10"><path d="M1 1 L5 5 L1 9" fill="none" stroke="#3c3c3c" stroke-width="1.6"/></svg>
  <!-- middle pane -->
  <div class="a" style="left:214px;top:100px;width:597px;height:600px;background:#f0f0f0;border:1px solid #828790;border-top:2px solid #828790"></div>
  <div class="a" style="left:216px;top:102px;width:594px;height:281px;background:#fff"></div>
  <!-- list header -->
  <div class="a" style="left:216px;top:102px;width:594px;height:281px;overflow:hidden"><div class="a" style="left:-216px;top:-102px;width:1680px;height:1050px">
  <div class="a hd" style="left:216px;width:86px"></div><div class="a hd" style="left:302px;width:51px"></div><div class="a hd" style="left:353px;width:38px"></div><div class="a hd" style="left:391px;width:76px"></div><div class="a hd" style="left:467px;width:360px"></div>
  <div class="t" style="left:222px;top:104px">Volume</div>
  <div class="t" style="left:309px;top:104px">Layout</div>
  <div class="t" style="left:360px;top:104px">Typ</div>
  <div class="t" style="left:398px;top:104px;letter-spacing:-0.27px">Dateisystem</div>
  <div class="t" style="left:474px;top:104px;letter-spacing:-0.46px">Status</div>
  <!-- rows -->
  <div class="t" style="left:239px;top:122px;letter-spacing:-0.44px">(C:)</div><div class="t" style="left:309px;top:122px;letter-spacing:-0.25px">Einfach</div><div class="t" style="left:360px;top:122px;letter-spacing:-0.76px">Basis</div><div class="t" style="left:398px;top:122px;letter-spacing:-0.95px">NTFS</div><div class="t" style="left:474px;top:122px;letter-spacing:-.08px">Fehlerfrei (Startpartition, Auslagerungsdatei, Absturzabbild, Primäre Partition)</div>
  <div class="t" style="left:239px;top:139px;letter-spacing:-0.44px">(D:)</div><div class="t" style="left:309px;top:139px;letter-spacing:-0.25px">Einfach</div><div class="t" style="left:360px;top:139px;letter-spacing:-0.76px">Basis</div><div class="t" style="left:398px;top:139px;letter-spacing:-0.95px">NTFS</div><div class="t" style="left:474px;top:139px;letter-spacing:-.08px">Fehlerfrei (System, Aktiv, Primäre Partition)</div>
  <div class="t" style="left:236px;top:156px;letter-spacing:-0.25px">Volume (E:)</div><div class="t" style="left:309px;top:156px;letter-spacing:-0.25px">Einfach</div><div class="t" style="left:360px;top:156px;letter-spacing:-0.76px">Basis</div><div class="t" style="left:398px;top:156px;letter-spacing:-0.95px">NTFS</div><div class="t" style="left:474px;top:156px;letter-spacing:-.08px">Fehlerfrei (Primäre Partition)</div>
  <div class="t" style="left:236px;top:173px;letter-spacing:-0.18px">Volume (G:)</div><div class="t" style="left:309px;top:173px;letter-spacing:-0.25px">Einfach</div><div class="t" style="left:360px;top:173px;letter-spacing:-0.76px">Basis</div><div class="t" style="left:398px;top:173px;letter-spacing:-0.95px">NTFS</div><div class="t" style="left:474px;top:173px;letter-spacing:-.08px">Fehlerfrei (Primäre Partition)</div>
  <div class="a dk" style="left:220px;top:127px"><i></i></div><div class="a dk" style="left:220px;top:144px"><i></i></div><div class="a dk" style="left:220px;top:161px"><i></i></div><div class="a dk" style="left:220px;top:178px"><i></i></div>
  </div></div>
  <!-- list hscroll -->
  <div class="a" style="left:216px;top:383px;width:594px;height:17px;background:#f0f0f0"></div>
  <div class="a" style="left:233px;top:384px;width:385px;height:15px;background:#cdcdcd"></div>
  <svg style="left:221px;top:386px" width="7" height="10"><path d="M6 1 L2 5 L6 9" fill="none" stroke="#3c3c3c" stroke-width="1.6"/></svg>
  <svg style="left:798px;top:386px" width="7" height="10"><path d="M1 1 L5 5 L1 9" fill="none" stroke="#3c3c3c" stroke-width="1.6"/></svg>
  <!-- splitter -->
  <div class="a" style="left:216px;top:402px;width:594px;height:1px;background:#fff"></div>
  <div class="a" style="left:216px;top:406px;width:594px;height:1px;background:#a0a0a0"></div>
  <div class="a" style="left:216px;top:407px;width:594px;height:1px;background:#696969"></div>
  <div class="a" style="left:808px;top:401px;width:2px;height:6px;background:#696969"></div>
  <!-- disk 2 -->
  <div class="a" style="left:216px;top:413px;width:123px;height:98px;border-top:1px solid #fff;border-right:2px solid #a0a0a0;border-bottom:1px solid #a0a0a0"></div>
  <div class="a dk" style="left:227px;top:425px"><i></i></div>
  <div class="t" style="left:243px;top:421px;font-weight:bold;letter-spacing:.1px">Datenträger 2</div>
  <div class="t" style="left:225px;top:436px;letter-spacing:-0.76px">Basis</div>
  <div class="t" style="left:225px;top:451px;letter-spacing:-.6px">465,76 GB</div>
  <div class="t" style="left:225px;top:466px">Online</div>
  <div class="a" style="left:339px;top:414px;width:433px;height:95px;border:1px solid #fff;border-right:2px solid #a0a0a0;border-bottom:2px solid #a0a0a0"></div>
  <div class="a" style="left:341px;top:419px;width:426px;height:13px;background:#000082"></div>
  <div class="a" style="left:343px;top:435px;width:425px;height:68px;background:#fff;border-left:2px solid #808080;border-top:1px solid #808080;border-right:1px solid #c8c8c8;border-bottom:1px solid #c8c8c8"></div>
  <div class="t" style="left:348px;top:438px;font-weight:bold;word-spacing:3px;letter-spacing:-0.18px">Volume (G:)</div>
  <div class="t" style="left:348px;top:453px;letter-spacing:-.65px">465,76 GB NTFS</div>
  <div class="t" style="left:348px;top:468px;letter-spacing:-.08px">Fehlerfrei (Primäre Partition)</div>
  <!-- disk 3 -->
  <div class="a" style="left:216px;top:513px;width:123px;height:97px;border-top:1px solid #fff;border-right:2px solid #a0a0a0;border-bottom:1px solid #a0a0a0"></div>
  <div class="a" style="left:339px;top:513px;width:454px;height:1px;background:#fff"></div>
  <div class="a" style="left:339px;top:608px;width:454px;height:1px;background:#a0a0a0"></div>
  <div class="a dk g" style="left:227px;top:524px"><i></i></div>
  <div class="t" style="left:243px;top:520px;font-weight:bold;letter-spacing:.1px">Datenträger 3</div>
  <div class="a" style="left:225px;top:535px;width:105px;height:16px;overflow:hidden"><div class="t" style="left:0;top:0">Wechselmedium (H:)</div></div>
  <div class="t" style="left:225px;top:565px">Kein Medium</div>
  <!-- vscroll -->
  <div class="a" style="left:793px;top:408px;width:17px;height:272px;background:#f0f0f0;border-left:1px solid #fafafa"></div>
  <div class="a" style="left:794px;top:543px;width:15px;height:119px;background:#cdcdcd"></div>
  <svg style="left:797px;top:414px" width="10" height="7"><path d="M1 6 L5 2 L9 6" fill="none" stroke="#3c3c3c" stroke-width="1.6"/></svg>
  <svg style="left:797px;top:667px" width="10" height="7"><path d="M1 1 L5 5 L9 1" fill="none" stroke="#3c3c3c" stroke-width="1.6"/></svg>
  <!-- legend -->
  <div class="a" style="left:216px;top:680px;width:594px;height:1px;background:#fff"></div>
  <div class="a" style="left:222px;top:684px;width:10px;height:11px;background:#000"></div>
  <div class="t" style="left:237px;top:681px">Nicht zugeordnet</div>
  <div class="a" style="left:335px;top:684px;width:10px;height:11px;background:#000082"></div>
  <div class="t" style="left:350px;top:681px">Primäre Partition</div>
  <!-- actions pane -->
  <div class="a" style="left:815px;top:100px;width:189px;height:600px;background:#fff;border-left:2px solid #696969;border-top:2px solid #828790;border-bottom:1px solid #c8c8c8"></div>
  <div class="a" style="left:817px;top:102px;width:187px;height:22px;background:#f0f0f0;border-bottom:1px solid #a0a0a0;border-top:1px solid #c8c8c8"></div>
  <div class="t" style="left:822px;top:105px;font-weight:bold;letter-spacing:-.2px">Aktionen</div>
  <div class="a" style="left:818px;top:125px;width:185px;height:24px;background:linear-gradient(#c3d7ee,#a9c3e2);border-bottom:1px solid #8fb0d6"></div>
  <div class="t" style="left:824px;top:129px">Datenträgerverwaltung</div>
  <svg style="left:987px;top:134px" width="9" height="5"><path d="M0 5 L4.5 0 L9 5 Z" fill="#000"/></svg>
  <div class="t" style="left:848px;top:153px">Weitere Aktionen</div>
  <svg style="left:990px;top:156px" width="5" height="9"><path d="M0 0 L5 4.5 L0 9 Z" fill="#000"/></svg>
  <!-- status bar -->
  <div class="a" style="left:21px;top:701px;width:983px;height:23px;background:#f0f0f0"></div>
  <div class="a" style="left:784px;top:703px;width:1px;height:20px;background:#d7d7d7"></div>
  <div class="a" style="left:917px;top:703px;width:1px;height:20px;background:#d7d7d7"></div>
  <div class="a" style="left:1000px;top:703px;width:1px;height:20px;background:#d7d7d7"></div>

</div>

<div class="win" style="clip-path:inset(11px 272px 585px 1008px)">
  <div class="a" style="left:1008px;top:11px;width:400px;height:454px;background:#f0f0f0;border:1px solid #1f1f1f;border-top-color:#3a3a3a"></div>
  <div class="a" style="left:1009px;top:12px;width:398px;height:29px;background:#fff"></div>
  <div class="t" style="left:1017px;top:18px;letter-spacing:-.3px">Eigenschaften von SanDisk Extreme USB Device</div>
  <svg style="left:1386px;top:20px" width="11" height="11"><path d="M0.5 0.5 L10.5 10.5 M10.5 0.5 L0.5 10.5" stroke="#000" stroke-width="1.1"/></svg>
  <!-- tab page -->
  <div class="a" style="left:1015px;top:68px;width:384px;height:360px;background:#fff;border:1px solid #d9d9d9"></div>
  <!-- tabs -->
  <div class="a tb" style="left:1017px;width:57px"></div>
  <div class="a tb" style="left:1073px;width:61px"></div>
  <div class="a tb" style="left:1188px;width:44px"></div>
  <div class="a tb" style="left:1231px;width:45px"></div>
  <div class="a tb" style="left:1275px;width:59px"></div>
  <div class="a" style="left:1133px;top:48px;width:56px;height:21px;background:#fff;border:1px solid #d9d9d9;border-bottom:none"></div>
  <div class="t d" style="left:1023px;top:52px">Allgemein</div>
  <div class="t d" style="left:1080px;top:52px">Richtlinien</div>
  <div class="t d" style="left:1141px;top:50px">Volumes</div>
  <div class="t d" style="left:1193px;top:52px">Treiber</div>
  <div class="t d" style="left:1237px;top:52px">Details</div>
  <div class="t d" style="left:1282px;top:52px">Ereignisse</div>
  <!-- content -->
  <div class="t d" style="left:1030px;top:80px">Die auf diesem Datenträger enthaltenen Volumes werden unten aufgeführt.</div>
  <div class="a" style="left:1030px;top:103px;width:362px;height:1px;background:#a0a0a0"></div>
  <div class="t d" style="left:1030px;top:111px">Datenträger:</div><div class="t d" style="left:1147px;top:111px">Datenträger 3</div>
  <div class="t d" style="left:1030px;top:132px">Typ:</div><div class="t d" style="left:1147px;top:132px">Wechselmedium (H:)</div>
  <div class="t d" style="left:1030px;top:154px">Status:</div><div class="t d" style="left:1147px;top:154px">Kein Medium</div>
  <div class="t d" style="left:1030px;top:175px">Partitionsstil:</div><div class="t d" style="left:1147px;top:175px">Master Boot Record (MBR)</div>
  <div class="t d" style="left:1030px;top:196px">Speicherkapazität:</div><div class="t d" style="left:1147px;top:196px">0 MB</div>
  <div class="t d" style="left:1030px;top:217px">Verfügbarer Speicher:</div><div class="t d" style="left:1147px;top:217px">0 MB</div>
  <div class="t d" style="left:1030px;top:238px">Reservierter Speicher:</div><div class="t d" style="left:1147px;top:238px">0 MB</div>
  <div class="t d" style="left:1030px;top:266px">Volumes:</div>
  <div class="a" style="left:1030px;top:285px;width:365px;height:85px;background:#fff;border:1px solid #828790"></div>
  <div class="t d" style="left:1038px;top:290px">Volume</div>
  <div class="a" style="left:1271px;top:287px;width:1px;height:23px;background:#e5e5e5"></div>
  <div class="t d" style="left:1278px;top:290px">Kapazität</div>
  <div class="a" style="left:1391px;top:287px;width:1px;height:23px;background:#e5e5e5"></div>
  <div class="a" style="left:1310px;top:377px;width:84px;height:21px;background:#cccccc;border:1px solid #bfbfbf"></div>
  <div class="t d" style="left:1318px;top:379px;color:#838383">Eigenschaften</div>
  <div class="a" style="left:1246px;top:435px;width:72px;height:21px;background:#e1e1e1;border:2px solid #0078d7"></div>
  <div class="t d" style="left:1246px;top:437px;width:72px;text-align:center">OK</div>
  <div class="a" style="left:1327px;top:435px;width:72px;height:21px;background:#e1e1e1;border:1px solid #adadad"></div>
  <div class="t d" style="left:1327px;top:437px;width:72px;text-align:center">Abbrechen</div>
</div>

<div id="tb" class="a"></div>
<div class="win" style="clip-path:inset(1010px 0 0 0)">
  <div class="a" style="left:0;top:1010px;width:48px;height:40px;background:linear-gradient(180deg,#1a2226,#141a1c 60%,#0e0f0e)"></div>
  <div class="a" style="left:392px;top:1010px;width:143px;height:40px;background:radial-gradient(ellipse at 30% 40%,#22241a 0,#15150f 60%,#1b1812 100%)"></div>
  <div class="a" style="left:535px;top:1010px;width:1124px;height:32px;background:#232323"></div>
  <div class="a" style="left:535px;top:1042px;width:1145px;height:8px;background:linear-gradient(90deg,#1a1712,#2a231b 20%,#17140f 45%,#2b241c 70%,#1a1611)"></div>
  <div class="t" style="left:551px;top:1022px;color:#0c0c0c">11 Elemente</div>
  <div class="a" style="left:1659px;top:1010px;width:21px;height:40px;background:#1e1e1e"></div>
  <!-- start -->
  <svg style="left:16px;top:1021px" width="17" height="18"><path d="M0 2.600 L6.800 1.600 V8.300 H0 Z M7.800 1.500 L16.500 0 V8.300 H7.800 Z M0 9.300 H6.800 V16 L0 15 Z M7.800 9.300 H16.500 V17.600 L7.800 16.200 Z" fill="#fff"/></svg>
  <div class="a" style="left:48px;top:1010px;width:344px;height:40px;background:#393939"></div>
  <div class="a" style="left:60px;top:1020px;font-size:15px;line-height:20px;color:#a6a6a6;letter-spacing:-.2px">Windows durchsuchen</div>
  <!-- task view -->
  <svg style="left:406px;top:1023px" width="21" height="14"><rect x="4.700" y=".7" width="11.600" height="12.600" fill="none" stroke="#fff" stroke-width="1.400"/><path d="M2.500 2.500 H.7 V11.500 H2.500 M18.500 2.500 H20.300 V11.500 H18.500" fill="none" stroke="#fff" stroke-width="1.400"/></svg>
  <!-- perfmon -->
  <svg style="left:454px;top:1019px" width="24" height="22"><rect x="1" y="3" width="8" height="13" fill="#b9bec4" stroke="#8b9198"/><path d="M5 1 H22 L21 14 H6 Z" fill="#dfe4e9" stroke="#8b9198"/><path d="M7 3 H20 L19.300 12 H7.700 Z" fill="#eef4f9"/><path d="M8 11 L10 7 L11.500 10 L13 4 L15 10 L16.500 7 L18.500 11" fill="none" stroke="#2d7fd0" stroke-width="1.100"/><path d="M10 15 H17 L18 18 H9 Z" fill="#c9ced4"/><ellipse cx="13.500" cy="19.500" rx="7" ry="2" fill="#d5d9de" stroke="#9aa0a7" stroke-width=".6"/></svg>
  <!-- computer -->
  <svg style="left:503px;top:1018px" width="24" height="23"><path d="M7 .5 L23 5 V19 L7 13 Z" fill="#39b3f3"/><path d="M7 .5 L23 5 V7 L7 2.500 Z" fill="#7fd0fa"/><path d="M12 15 L15 16.200 V19 L12 18 Z" fill="#cfd4d9"/><path d="M1 17.500 L12 15.500 L20 19.500 L8 22.500 Z" fill="#e4e7ea" stroke="#aab0b6" stroke-width=".5"/></svg>
  <!-- edge -->
  <svg style="left:554px;top:1018px" width="21" height="23"><path d="M1 11.500 Q2 2 11 1.500 Q20.500 1.500 20.500 12 V14 H7.500 Q8 19 13.500 19 Q17 19 20 17.300 V21 Q16.500 22.500 12.500 22.500 Q2.500 22 2.500 12.500 Q3 8 7 6 Q5 8 4.800 9 Q7.500 5.500 10.800 5.500 Q14.500 5.500 14.800 10 H7.500 Q7.800 6.500 10 5 Q3.500 5 1 11.500 Z" fill="#1e80e3"/></svg>
  <!-- minecraft -->
  <svg style="left:600px;top:1017px" width="26" height="25"><path d="M13 0 L25 5.500 L13 11.500 L1 5.500 Z" fill="#5da340"/><path d="M13 2 L20 5.500 L13 9 L6 5.500 Z" fill="#6dbb4c"/><path d="M1 5.500 L13 11.500 V24.500 L1 18 Z" fill="#7a5136"/><path d="M25 5.500 L13 11.500 V24.500 L25 18 Z" fill="#5b3b27"/><path d="M1 5.500 L13 11.500 L25 5.500 V8 L13 14 L1 8 Z" fill="#4c8a35"/></svg>
  <!-- cmd -->
  <svg style="left:650px;top:1020px" width="23" height="19"><rect x=".5" y=".5" width="22" height="18" fill="#0a0a0a" stroke="#7d7d7d"/><rect x="1" y="1" width="21" height="2.500" fill="#c9c9c9"/><path d="M3 7.500 H6 M7 7.500 H9 M10 9 H16" stroke="#e6e6e6" stroke-width="1.300"/></svg>
  <!-- explorer -->
  <svg style="left:700px;top:1020px" width="23" height="19"><path d="M0 1.500 H8 L10 3.500 H22.500 V18.500 H0 Z" fill="#f6c945"/><path d="M0 5 H22.500 V18.500 H0 Z" fill="#fbdc72"/><path d="M4.500 10.500 H18 V18.500 H14 V14 H8.500 V18.500 H4.500 Z" fill="#37a6ee"/></svg>
  <!-- active compmgmt -->
  <div class="a" style="left:736px;top:1010px;width:44px;height:40px;background:#3f3f3f"></div>
  <div class="a" style="left:781px;top:1010px;width:3px;height:40px;background:#353535"></div>
  <svg style="left:747px;top:1017px" width="25" height="24"><path d="M9 2 L23 0 V14 L9 16 Z" fill="#e4e9ee" stroke="#8c959e" stroke-width=".6"/><path d="M10.500 3.500 L21.500 2 V12.500 L10.500 14 Z" fill="#1530b8"/><path d="M1 12 L12 10 L19 14 V21 L8 23.500 L1 19 Z" fill="#b4bcc5" stroke="#7b8590" stroke-width=".6"/><path d="M1 12 L8 16 V23.500 L1 19 Z" fill="#8f99a4"/><path d="M8 16 L19 14" stroke="#7b8590" stroke-width=".6"/><circle cx="13.500" cy="18.500" r="1.500" fill="#e9edf0"/></svg>
  <!-- running underlines -->
  <div class="a" style="left:544px;top:1048px;width:40px;height:2px;background:#76b9ed"></div>
  <div class="a" style="left:691px;top:1048px;width:39px;height:2px;background:#76b9ed"></div>
  <div class="a" style="left:736px;top:1048px;width:47px;height:2px;background:#76b9ed"></div>
  <!-- tray -->
  <svg style="left:1473px;top:1025px" width="14" height="9"><path d="M1 8 L7 2 L13 8" fill="none" stroke="#fff" stroke-width="1.500"/></svg>
  <svg style="left:1498px;top:1022px" width="16" height="16"><path d="M1.500 15 A13 13 0 0 1 14.500 2" fill="none" stroke="#8a8a8a" stroke-width="1.200"/><path d="M4.800 15 A9.700 9.700 0 0 1 14.500 5.300" fill="none" stroke="#fff" stroke-width="1.300"/><path d="M8 15 A6.500 6.500 0 0 1 14.500 8.500" fill="none" stroke="#fff" stroke-width="1.300"/><path d="M11 15 A3.500 3.500 0 0 1 14.500 11.500 V15 Z" fill="#fff"/></svg>
  <svg style="left:1520px;top:1021px" width="18" height="17"><path d="M1 6 H4 L8 2 V15 L4 11 H1 Z" fill="none" stroke="#fff" stroke-width="1.200"/><path d="M10.500 6 Q12 8.500 10.500 11" fill="none" stroke="#fff" stroke-width="1.100"/><path d="M12.800 4 Q15.300 8.500 12.800 13" fill="none" stroke="#bbb" stroke-width="1.100"/><path d="M15 2.200 Q18.300 8.500 15 14.800" fill="none" stroke="#777" stroke-width="1.100"/></svg>
  <svg style="left:1544px;top:1021px" width="17" height="18"><path d="M0 0 H16.500 V13 H10.500 L8 16.500 L5.500 13 H0 Z" fill="#fff"/><path d="M3 3.500 H13.500 M3 6.500 H13.500 M3 9.500 H10" stroke="#232323" stroke-width="1.200"/></svg>
  <div class="t" style="left:1571px;top:1022px;color:#fff;letter-spacing:-.3px">DEU</div>
  <div class="t" style="left:1624px;top:1013px;color:#fff;letter-spacing:-.2px">18:16</div>
  <div class="t" style="left:1610px;top:1030px;color:#fff;letter-spacing:-.35px">19.07.2016</div>
  <div class="a" style="left:1674px;top:1010px;width:1px;height:40px;background:#4a4a4a"></div>
</div>

</body>
</html>
